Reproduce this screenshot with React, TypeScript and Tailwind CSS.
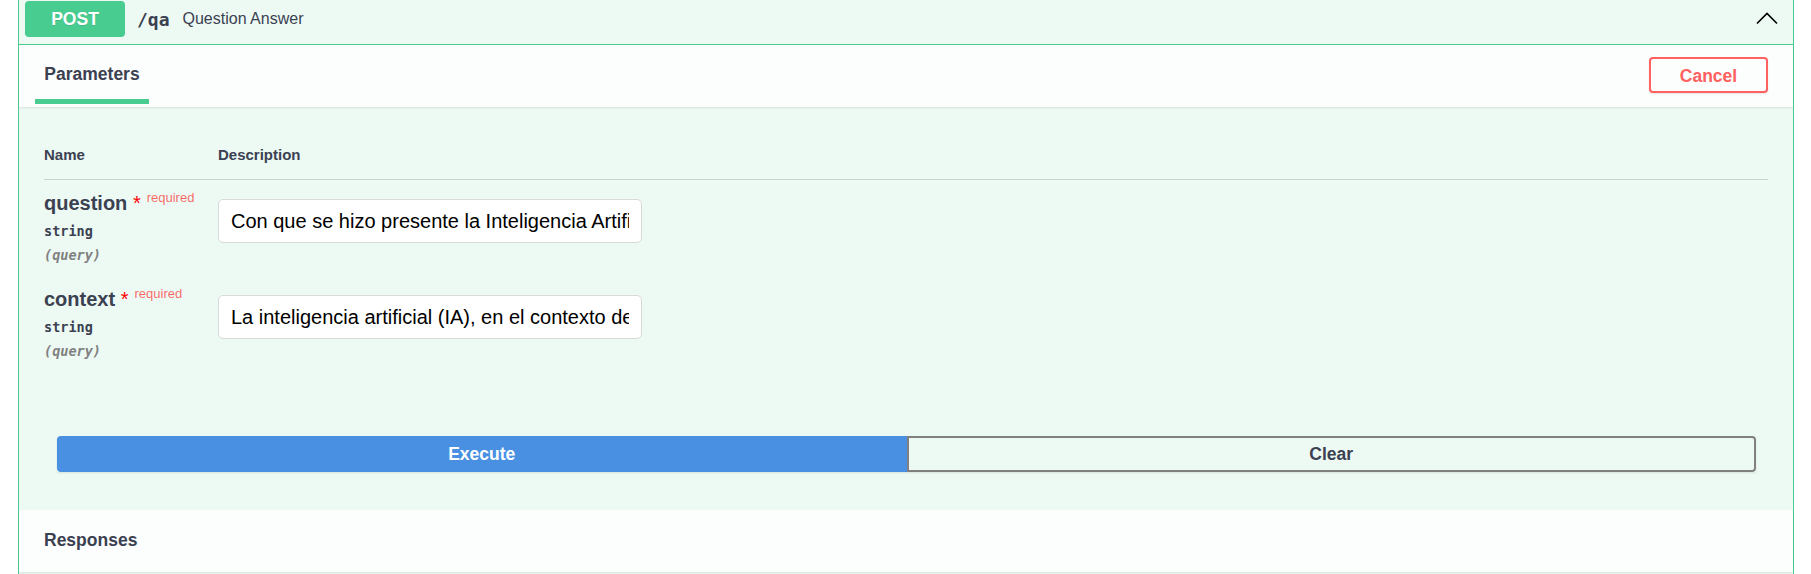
import React from "react";

function ParamRow({ name, value }: { name: string; value: string }) {
  return (
    <div className="flex">
      <div className="w-[174px] pt-[11px] pb-[11px]">
        <div className="h-[24px] leading-[24px] whitespace-nowrap">
          <span className="text-[20px] font-bold">{name}</span>
          <span className="text-[20px] text-[#ff0000]">{"\u00a0*"}</span>
          <span className="relative top-[-8px] pl-[6px] text-[13px] text-[rgba(255,0,0,0.6)]">required</span>
        </div>
        <div className="mt-[6px] h-[20px] leading-[20px] text-[13.5px] font-bold font-['DejaVu_Sans_Mono',monospace] text-[#3b4151]">
          string
        </div>
        <div className="mt-[4px] h-[20px] leading-[20px] text-[13.5px] font-bold italic font-['DejaVu_Sans_Mono',monospace] text-[#808080]">
          (query)
        </div>
      </div>
      <div className="flex-1">
        <input
          readOnly
          defaultValue={value}
          className="mt-[19px] block w-[424px] h-[44px] bg-white border border-[#d9d9d9] rounded-[5px] pl-[12px] pr-[12px] text-[20px] text-black outline-none"
        />
      </div>
    </div>
  );
}

export default function App() {
  return (
    <div className="w-[1811px] h-[574px] overflow-hidden bg-white font-['Liberation_Sans',Arial,sans-serif] text-[#3b4151]">
      <div className="ml-[18px] w-[1776px] border-x border-[#49cc90] bg-[#edfaf4]">
        {/* Summary */}
        <div className="flex items-center h-[45px] border-b border-[#49cc90] pl-[6px] pr-[15px] pt-[1px] pb-[7px]">
          <div className="w-[100px] h-[36px] rounded-[4px] bg-[#49cc90] text-white font-bold text-[17.5px] flex items-center justify-center [text-shadow:0_1px_0_rgba(0,0,0,0.1)]">
            POST
          </div>
          <span className="ml-[12px] pr-[13px] font-['DejaVu_Sans_Mono',monospace] font-bold text-[18px]">/qa</span>
          <span className="text-[16px]">Question Answer</span>
          <svg className="ml-auto self-start mt-[11px]" width="22" height="13" viewBox="0 0 22 13">
            <polyline points="1,11.5 11,1.5 21,11.5" fill="none" stroke="#000" strokeWidth="1.6" />
          </svg>
        </div>

        {/* Tab header */}
        <div className="relative z-10 flex h-[62px] bg-[#fbfefd] shadow-[0_1px_2px_rgba(0,0,0,0.1)]">
          <div className="ml-[16px] w-[114px] flex flex-col items-center pt-[19px]">
            <div className="h-[20px] leading-[20px] text-[17.5px] font-bold">Parameters</div>
            <div className="mt-[15px] h-[5px] w-full bg-[#49cc90]" />
          </div>
          <button className="ml-auto mr-[25px] mt-[12px] w-[119px] h-[36px] border-2 border-[#ff6060] rounded-[4px] text-[#ff6060] font-bold text-[17.5px] leading-[20px] pt-[2px] shadow-[0_1px_2px_rgba(0,0,0,0.1)]">
            Cancel
          </button>
        </div>

        {/* Parameters */}
        <div className="pt-[25px] px-[25px] pb-[38px]">
          <div className="flex pt-[12px] pb-[14px] border-b border-[rgba(59,65,81,0.2)] text-[15px] leading-[21px] font-bold">
            <div className="w-[174px]">Name</div>
            <div>Description</div>
          </div>
          <ParamRow name="question" value="Con que se hizo presente la Inteligencia Artificial" />
          <ParamRow
            name="context"
            value="La inteligencia artificial (IA), en el contexto de las ciencias de la computación"
          />
          <div className="mt-[64px] ml-[13px] mr-[12px] flex h-[36px] shadow-[0_1px_2px_rgba(0,0,0,0.1)]">
            <button className="flex-1 bg-[#4990e2] border-2 border-[#4990e2] rounded-l-[4px] text-white font-bold text-[17.5px]">
              Execute
            </button>
            <button className="flex-1 border-2 border-[#808080] rounded-r-[4px] text-[#3b4151] font-bold text-[17.5px]">
              Clear
            </button>
          </div>
        </div>

        {/* Responses */}
        <div className="relative z-10 h-[62px] bg-[#fbfefd] shadow-[0_1px_2px_rgba(0,0,0,0.1)] pl-[25px] pt-[20px]">
          <div className="h-[20px] leading-[20px] text-[17.5px] font-bold">Responses</div>
        </div>
        <div className="h-[20px]" />
      </div>
    </div>
  );
}
